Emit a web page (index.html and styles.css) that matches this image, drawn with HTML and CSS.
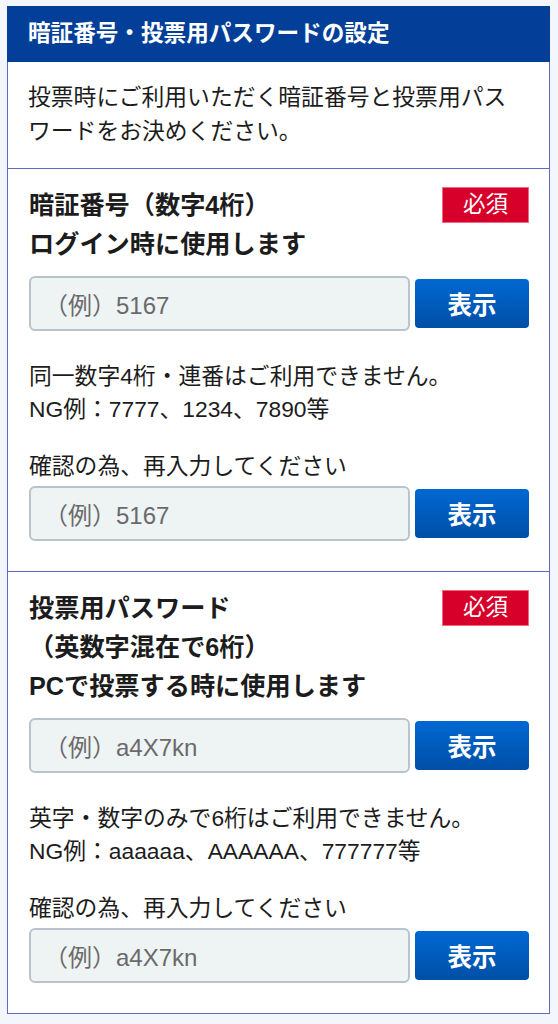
FILE: index.html
```html
<!DOCTYPE html>
<html lang="ja">
<head>
<meta charset="utf-8">
<title>暗証番号・投票用パスワードの設定</title>
<link rel="stylesheet" href="styles.css">
</head>
<body>
<div class="page">
  <div class="card">
    <div class="card-head">暗証番号・投票用パスワードの設定</div>
    <div class="intro">投票時にご利用いただく暗証番号と投票用パスワードをお決めください。</div>

    <div class="section">
      <div class="title-row">
        <div class="title">暗証番号（数字4桁）<br>ログイン時に使用します</div>
        <span class="badge">必須</span>
      </div>
      <div class="field-row first">
        <div class="input"><span class="ph">（例）5167</span></div>
        <button class="btn">表示</button>
      </div>
      <div class="note">同一数字4桁・連番はご利用できません。<br>NG例：7777、1234、7890等</div>
      <div class="confirm">確認の為、再入力してください</div>
      <div class="field-row">
        <div class="input"><span class="ph">（例）5167</span></div>
        <button class="btn">表示</button>
      </div>
    </div>

    <div class="section">
      <div class="title-row">
        <div class="title">投票用パスワード<br>（英数字混在で6桁）<br>PCで投票する時に使用します</div>
        <span class="badge">必須</span>
      </div>
      <div class="field-row first">
        <div class="input"><span class="ph">（例）a4X7kn</span></div>
        <button class="btn">表示</button>
      </div>
      <div class="note">英字・数字のみで6桁はご利用できません。<br>NG例：aaaaaa、AAAAAA、777777等</div>
      <div class="confirm">確認の為、再入力してください</div>
      <div class="field-row">
        <div class="input"><span class="ph">（例）a4X7kn</span></div>
        <button class="btn">表示</button>
      </div>
    </div>
  </div>
</div>
</body>
</html>
```

FILE: styles.css
```css
* { box-sizing: border-box; }
html, body {
  margin: 0;
  padding: 0;
  background: #f3f6fc;
}
body {
  font-family: "Liberation Sans", "Noto Sans CJK JP", sans-serif;
  color: #1c1c1c;
  font-size: 22.8px;
}
.page {
  padding: 6px 8px 0 7px;
}
.card {
  background: #fff;
  border: 1px solid #5d6cc0;
}
.card-head {
  background: #033f98;
  color: #fff;
  font-weight: bold;
  font-size: 22.6px;
  height: 56px;
  line-height: 56px;
  margin: -1px -1px 0 -1px;
  padding-left: 21px;
}
.intro {
  padding: 18px 24px 20px 20px;
  line-height: 34px;
  border-bottom: 1px solid #5d6cc0;
}
.section {
  padding: 17px 20px 30px 21px;
}
.section + .section {
  border-top: 1px solid #5d6cc0;
}
.title-row {
  display: flex;
  justify-content: space-between;
  align-items: flex-start;
}
.title {
  font-weight: bold;
  font-size: 25.2px;
  line-height: 39px;
}
.badge {
  margin-top: 1px;
  width: 87px;
  height: 36px;
  background: #d6002a;
  border: 1px solid #ec6a82;
  color: #fff;
  font-size: 22.5px;
  line-height: 34px;
  text-align: center;
}
.field-row {
  display: flex;
  align-items: center;
  gap: 5px;
  margin-top: 3px;
}
.field-row.first {
  margin-top: 12px;
}
.input {
  width: 381px;
  height: 55px;
  border: 2px solid #b9c3cb;
  border-radius: 6px;
  background: #eef3f4;
  padding-left: 13px;
  display: flex;
  align-items: center;
}
.ph {
  color: #6a6a6a;
  font-size: 24px;
}
.btn {
  width: 114px;
  height: 49px;
  border: none;
  border-radius: 4px;
  background: linear-gradient(#0068d2, #004fa6);
  color: #fff;
  font-family: "Liberation Sans", "Noto Sans CJK JP", sans-serif;
  font-weight: bold;
  font-size: 24.5px;
  padding: 0;
}
.note {
  margin-top: 29px;
  line-height: 33px;
}
.confirm {
  margin-top: 23px;
  line-height: 34px;
}
```
